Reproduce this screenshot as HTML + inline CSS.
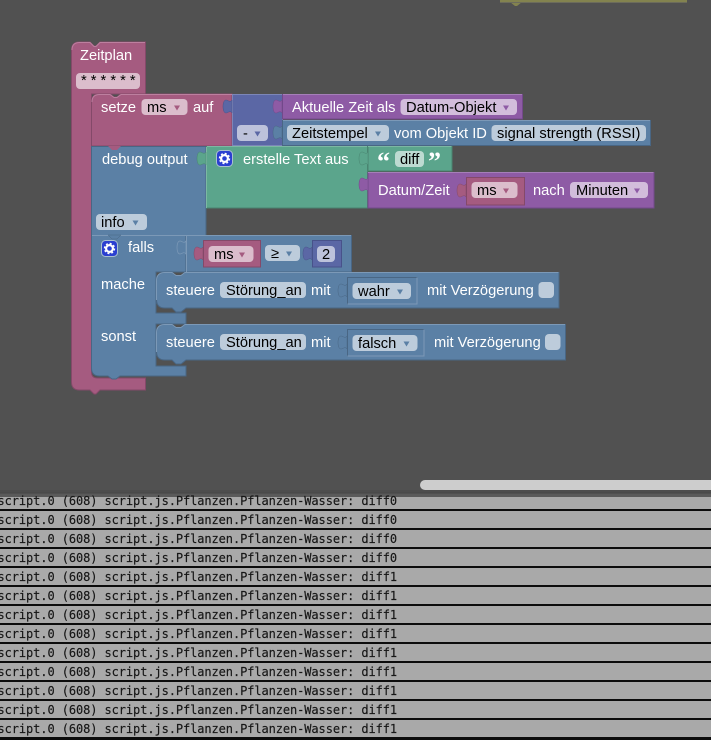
<!DOCTYPE html>
<html><head><meta charset="utf-8"><style>
html,body{margin:0;padding:0;background:#515151;width:711px;height:740px;overflow:hidden}
svg{position:absolute;left:0;top:0;display:block}
.t{font:14.67px "Liberation Sans",sans-serif;fill:#fff}
.k{font:14.67px "Liberation Sans",sans-serif;fill:#000}
.f{fill:#fff;fill-opacity:.6}
.m{font:12px "DejaVu Sans Mono",monospace;fill:#161616;stroke:#161616;stroke-width:.15px;letter-spacing:-.09px}
</style></head><body>
<svg width="711" height="740" viewBox="0 0 711 740">
<defs>
<path id="tab" d="M0,0C-2,3 -4,0 -6,0C-8,0 -9,3 -9,6.500C-9,10 -8,13 -6,13C-4,13 -2,10 0,13Z"/>
<g id="gear"><rect x=".5" y=".5" width="16" height="16" rx="4" fill="#2a3fd0" stroke="#a9c0d0"/>
<circle cx="8.5" cy="8.5" r="3.4" fill="none" stroke="#fff" stroke-width="2.2"/>
<circle cx="8.5" cy="8.5" r="5" fill="none" stroke="#fff" stroke-width="1.4" stroke-dasharray="2 1.93"/></g>
</defs>
<rect width="711" height="740" fill="#515151"/>
<!-- top olive block -->
<path d="M500,0H687V2H522l-5,4h-2l-5,-4H500Z" fill="#83834f"/>
<path d="M500,2.500H687" stroke="#6c6c5c" stroke-width="1"/>

<!-- hat -->
<path d="M71.500,50q0,-8 8,-8H90l4,4h2l4,-4H145.500V94H91.500V372q0,6 6,6H145.500V390H100l-4,4h-2l-4,-4H79.500q-8,0 -8,-8Z" fill="#a55b80" stroke="#844969"/>
<path d="M72,50q0,-7.500 7.500,-7.500H90l4,4h2l4,-4H145" fill="none" stroke="#bd7f9f"/>
<text class="t" x="80" y="60">Zeitplan</text>
<rect class="f" x="76" y="73" width="64" height="16" rx="4"/>
<text class="k" x="81" y="85">* * * * * *</text>

<!-- setze -->
<path d="M91.500,102q0,-8 8,-8H110l4,3h3l4,-3H232V146H91.500Z" fill="#a55b80" stroke="#844969"/>
<path d="M92,102q0,-7.500 7.500,-7.500H110l4,3h3l4,-3H232" fill="none" stroke="#bd7f9f"/>
<text class="t" x="101" y="112">setze</text>
<rect class="f" x="141.500" y="99" width="46" height="16" rx="4"/>
<text class="k" x="147" y="112">ms</text>
<path d="M174,105.500h6l-3,5z" fill="#a55b80"/>
<text class="t" x="193" y="112">auf</text>

<!-- minus -->
<rect x="232.500" y="94.500" width="50" height="51" fill="#5b67a5" stroke="#7c86b8"/>
<use href="#tab" x="232" y="100" fill="#5b67a5" stroke="#48528a" stroke-width=".5"/>
<rect class="f" x="237" y="125" width="31" height="16" rx="4"/>
<text class="k" x="243" y="138">-</text>
<path d="M254.500,131.500h6l-3,5z" fill="#5b67a5"/>

<!-- Aktuelle -->
<rect x="282.500" y="94.500" width="240" height="24.500" fill="#8e5ba5" stroke="#72498a"/>
<path d="M283,94.500H522" stroke="#a57fb8"/>
<use href="#tab" x="282" y="100" fill="#8e5ba5" stroke="#72498a" stroke-width=".5"/>
<text class="t" x="292" y="112">Aktuelle Zeit als</text>
<rect class="f" x="400.500" y="99" width="116.500" height="16" rx="4"/>
<text class="k" x="406" y="112">Datum-Objekt</text>
<path d="M503,105.500h6l-3,5z" fill="#8e5ba5"/>

<!-- Zeitstempel -->
<rect x="282.500" y="120.500" width="368" height="25" fill="#5b80a5" stroke="#496684"/>
<path d="M283,120.500H650" stroke="#7c99b7"/>
<use href="#tab" x="282" y="126" fill="#5b80a5" stroke="#496684" stroke-width=".5"/>
<rect class="f" x="287" y="125" width="102" height="16" rx="4"/>
<text class="k" x="292" y="138">Zeitstempel</text>
<path d="M375,131.500h6l-3,5z" fill="#5b80a5"/>
<text class="t" x="394" y="138">vom Objekt ID</text>
<rect class="f" x="491.500" y="125" width="154.500" height="16" rx="4"/>
<text class="k" x="497" y="138">signal strength (RSSI)</text>

<!-- debug output -->
<rect x="91.500" y="146.500" width="114.500" height="89" fill="#5b80a5" stroke="#496684"/>
<path d="M108,146h13l-4,4h-5z" fill="#a55b80"/>
<text class="t" x="102" y="164">debug output</text>
<rect class="f" x="96" y="214" width="51" height="16" rx="4"/>
<text class="k" x="101" y="227">info</text>
<path d="M132.500,220.500h6l-3,5z" fill="#5b80a5"/>

<!-- green -->
<rect x="206.500" y="146.500" width="161" height="61.500" fill="#5ba58c" stroke="#498470"/>
<path d="M207,146.500H367M206.500,147V208" stroke="#7cb8a3" fill="none"/>
<use href="#tab" x="206" y="152" fill="#5ba58c" stroke="#498470" stroke-width=".5"/>
<use href="#gear" x="216" y="150"/>
<text class="t" x="243" y="164">erstelle Text aus</text>

<!-- diff -->
<rect x="368" y="146.500" width="84" height="24.500" fill="#5ba58c" stroke="#498470"/>
<path d="M368,146.500H451.500" stroke="#7cb8a3"/>
<use href="#tab" x="368" y="152" fill="#5ba58c" stroke="#498470" stroke-width=".5"/>
<text x="377" y="170" font-family="Liberation Serif,serif" font-weight="bold" font-size="26" fill="#fff">“</text>
<rect class="f" x="395" y="151" width="29" height="16" rx="4"/>
<text class="k" x="400" y="164">diff</text>
<text x="428" y="170" font-family="Liberation Serif,serif" font-weight="bold" font-size="26" fill="#fff">”</text>

<!-- Datum/Zeit -->
<rect x="368" y="172.500" width="286" height="35.500" fill="#8e5ba5" stroke="#72498a"/>
<path d="M368,172.500H653.500" stroke="#a57fb8"/>
<use href="#tab" x="368" y="178" fill="#8e5ba5" stroke="#72498a" stroke-width=".5"/>
<text class="t" x="378" y="195">Datum/Zeit</text>
<rect x="466.500" y="177.500" width="58" height="27.500" fill="#a55b80" stroke="#844969"/>
<use href="#tab" x="466" y="184" fill="#a55b80" stroke="#844969" stroke-width=".5"/>
<rect class="f" x="471.500" y="182" width="46" height="16" rx="4"/>
<text class="k" x="477" y="195">ms</text>
<path d="M503,188.500h6l-3,5z" fill="#a55b80"/>
<text class="t" x="533" y="195">nach</text>
<rect class="f" x="570" y="182" width="78" height="16" rx="4"/>
<text class="k" x="576" y="195">Minuten</text>
<path d="M634,188.500h6l-3,5z" fill="#8e5ba5"/>

<!-- falls -->
<path d="M91.500,235.500H186V272H156V313H186V324H156V366H186V376H120l-4,3h-4l-4,-3H99.500q-8,0 -8,-8Z" fill="#5b80a5" stroke="#496684"/>
<path d="M92,235.500H186" stroke="#7c99b7"/>
<path d="M108,235h13l-4,4h-5z" fill="#5b80a5" stroke="#496684" stroke-width=".5"/>
<use href="#gear" x="101" y="240"/>
<text class="t" x="128" y="252">falls</text>
<text class="t" x="101" y="289">mache</text>
<text class="t" x="101" y="341">sonst</text>

<!-- condition -->
<rect x="186.500" y="235.500" width="165" height="36.500" fill="#5b80a5" stroke="#496684"/>
<path d="M186.500,272V235.500H351" fill="none" stroke="#7c99b7"/>
<use href="#tab" x="186" y="241" fill="#5b80a5" stroke="#7c99b7" stroke-width=".7"/>
<rect x="203.500" y="240.500" width="57" height="26.500" fill="#a55b80" stroke="#844969"/>
<use href="#tab" x="203" y="247" fill="#a55b80" stroke="#844969" stroke-width=".5"/>
<rect class="f" x="208.500" y="246" width="45" height="16" rx="4"/>
<text class="k" x="214" y="259">ms</text>
<path d="M239,252.500h6l-3,5z" fill="#a55b80"/>
<rect class="f" x="265" y="245" width="35" height="16" rx="4"/>
<text class="k" x="271" y="258">≥</text>
<path d="M286,251.500h6l-3,5z" fill="#5b80a5"/>
<rect x="312.500" y="240.500" width="29" height="26.500" fill="#5b67a5" stroke="#48528a"/>
<use href="#tab" x="312" y="247" fill="#5b67a5" stroke="#48528a" stroke-width=".5"/>
<rect class="f" x="317" y="246" width="18" height="16" rx="4"/>
<text class="k" x="322" y="259">2</text>

<!-- steuere 1 -->
<path d="M156.500,281q0,-8.500 8.500,-8.500H172l4,3h5l4,-3H559V308H186l-5,4h-5l-4,-4H165q-8.500,0 -8.500,-8.500Z" fill="#5b80a5" stroke="#496684"/>
<path d="M156.500,300V281q0,-8.500 8.500,-8.500H172l4,3h5l4,-3H558.500" fill="none" stroke="#7c99b7"/>
<text class="t" x="166" y="295">steuere</text>
<rect class="f" x="220" y="282" width="86" height="16" rx="4"/>
<text class="k" x="226" y="295">Störung_an</text>
<text class="t" x="311" y="295">mit</text>
<rect x="347.500" y="277.500" width="69.500" height="26.500" fill="#5b80a5" stroke="#496684"/>
<path d="M417,277.500V304H347.500" fill="none" stroke="#7c99b7"/>
<use href="#tab" x="347" y="284" fill="#5b80a5" stroke="#496684" stroke-width=".5"/>
<rect class="f" x="352.500" y="283" width="58.500" height="16" rx="4"/>
<text class="k" x="358" y="296">wahr</text>
<path d="M397,289.500h6l-3,5z" fill="#5b80a5"/>
<text class="t" x="427" y="295">mit Verzögerung</text>
<rect class="f" x="538.500" y="282" width="15.500" height="16" rx="4"/>

<!-- steuere 2 -->
<path d="M156.500,333q0,-8.500 8.500,-8.500H172l4,3h5l4,-3H565.500V360H186l-5,4h-5l-4,-4H165q-8.500,0 -8.500,-8.500Z" fill="#5b80a5" stroke="#496684"/>
<path d="M156.500,352V333q0,-8.500 8.500,-8.500H172l4,3h5l4,-3H565" fill="none" stroke="#7c99b7"/>
<text class="t" x="166" y="347">steuere</text>
<rect class="f" x="220" y="334" width="86" height="16" rx="4"/>
<text class="k" x="226" y="347">Störung_an</text>
<text class="t" x="311" y="347">mit</text>
<rect x="347.500" y="329.500" width="76.500" height="26.500" fill="#5b80a5" stroke="#496684"/>
<path d="M424,329.500V356H347.500" fill="none" stroke="#7c99b7"/>
<use href="#tab" x="347" y="336" fill="#5b80a5" stroke="#496684" stroke-width=".5"/>
<rect class="f" x="352.500" y="335" width="65" height="16" rx="4"/>
<text class="k" x="358" y="348">falsch</text>
<path d="M403.500,341.500h6l-3,5z" fill="#5b80a5"/>
<text class="t" x="434" y="347">mit Verzögerung</text>
<rect class="f" x="545" y="334" width="15.500" height="16" rx="4"/>

<!-- scrollbar -->
<path d="M425,480H711V490H425a5,5 0 0 1 0,-10Z" fill="#cdcdcd"/>
<rect y="490" width="711" height="2.500" fill="#4d4d4d"/>
<rect y="492.500" width="711" height="1" fill="#474747"/>
<rect y="493.500" width="711" height="3.500" fill="#5a5a5a"/>

<!-- console -->
<rect y="497" width="711" height="243" fill="#a9a9a9"/>
<g fill="#0c0c0c">
<rect y="509" width="711" height="2"/><rect y="528" width="711" height="2"/><rect y="547" width="711" height="2"/><rect y="566" width="711" height="2"/><rect y="585" width="711" height="2"/><rect y="604" width="711" height="2"/><rect y="623" width="711" height="2"/><rect y="642" width="711" height="2"/><rect y="661" width="711" height="2"/><rect y="680" width="711" height="2"/><rect y="699" width="711" height="2"/><rect y="718" width="711" height="2"/><rect y="737" width="711" height="3"/>
</g>
<text class="m" x="-2.500" y="505">script.0 (608) script.js.Pflanzen.Pflanzen-Wasser: diff0</text>
<text class="m" x="-2.500" y="524">script.0 (608) script.js.Pflanzen.Pflanzen-Wasser: diff0</text>
<text class="m" x="-2.500" y="543">script.0 (608) script.js.Pflanzen.Pflanzen-Wasser: diff0</text>
<text class="m" x="-2.500" y="562">script.0 (608) script.js.Pflanzen.Pflanzen-Wasser: diff0</text>
<text class="m" x="-2.500" y="581">script.0 (608) script.js.Pflanzen.Pflanzen-Wasser: diff1</text>
<text class="m" x="-2.500" y="600">script.0 (608) script.js.Pflanzen.Pflanzen-Wasser: diff1</text>
<text class="m" x="-2.500" y="619">script.0 (608) script.js.Pflanzen.Pflanzen-Wasser: diff1</text>
<text class="m" x="-2.500" y="638">script.0 (608) script.js.Pflanzen.Pflanzen-Wasser: diff1</text>
<text class="m" x="-2.500" y="657">script.0 (608) script.js.Pflanzen.Pflanzen-Wasser: diff1</text>
<text class="m" x="-2.500" y="676">script.0 (608) script.js.Pflanzen.Pflanzen-Wasser: diff1</text>
<text class="m" x="-2.500" y="695">script.0 (608) script.js.Pflanzen.Pflanzen-Wasser: diff1</text>
<text class="m" x="-2.500" y="714">script.0 (608) script.js.Pflanzen.Pflanzen-Wasser: diff1</text>
<text class="m" x="-2.500" y="733">script.0 (608) script.js.Pflanzen.Pflanzen-Wasser: diff1</text>
</svg>
</body></html>
